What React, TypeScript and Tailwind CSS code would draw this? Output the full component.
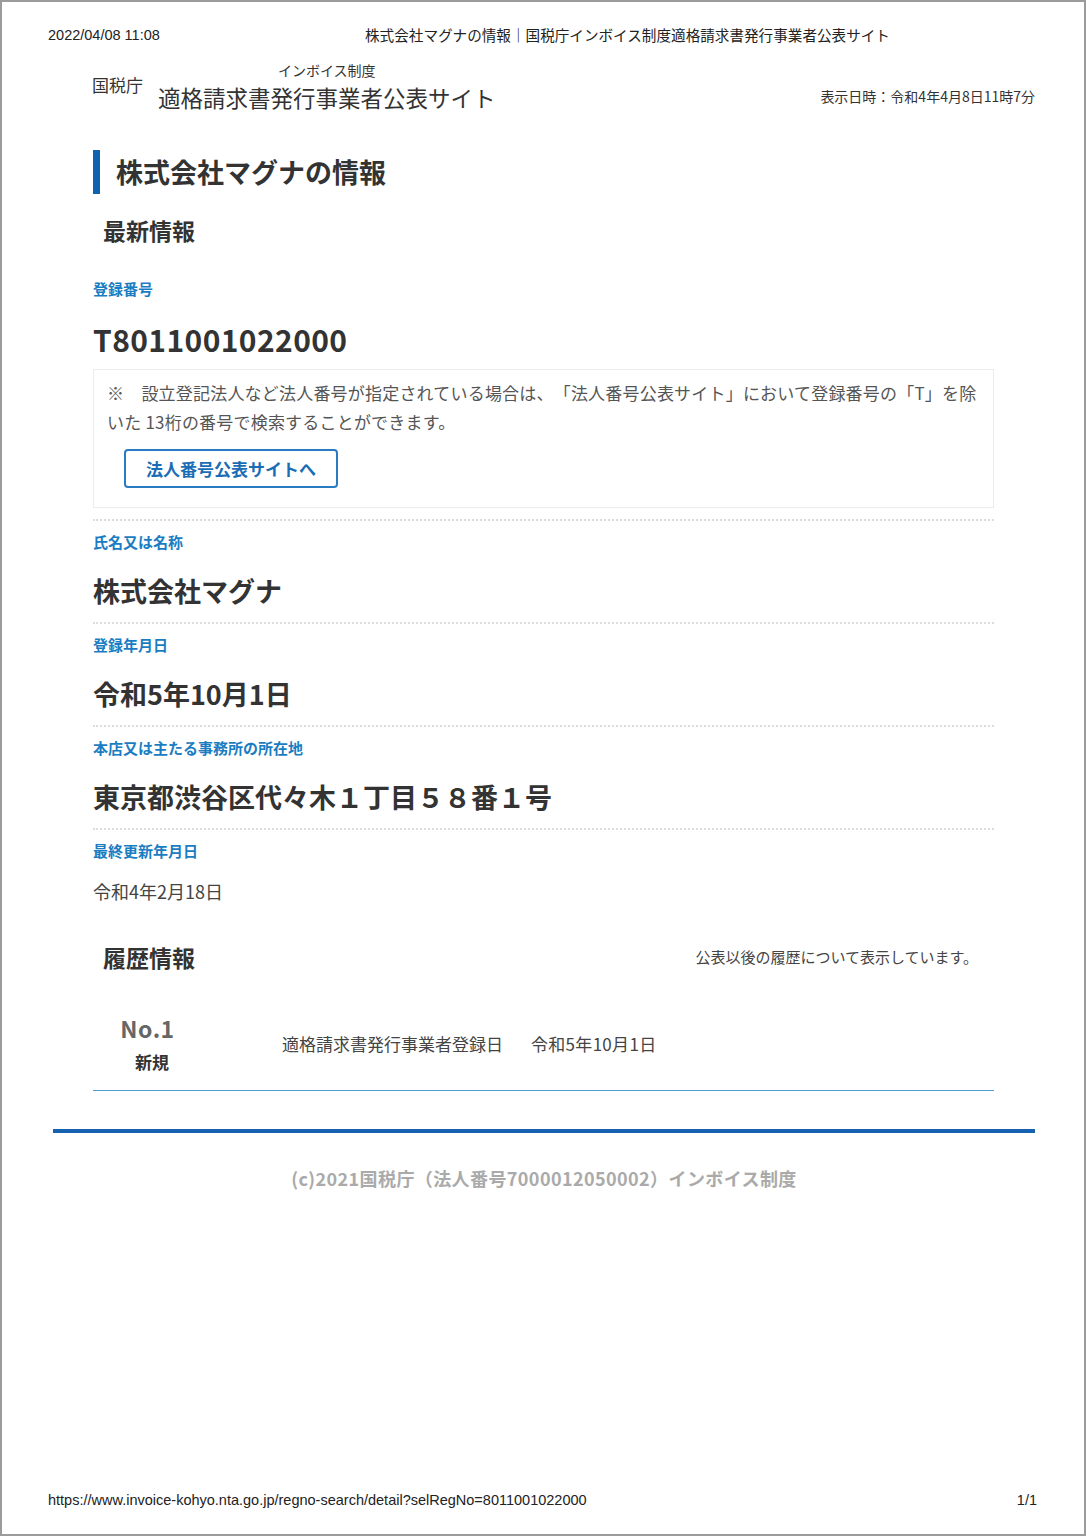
const JP = "font-['Noto_Sans_CJK_JP',sans-serif]";
const PRINT = "font-['Liberation_Sans','Noto_Sans_CJK_JP',sans-serif]";

function Field({ label, value, big = true, dotted = true }: { label: string; value: string; big?: boolean; dotted?: boolean }) {
  return (
    <div className={`${dotted ? 'border-t-2 border-dotted border-[#dcdcdc]' : ''} pt-[11px] pb-[13px]`}>
      <div className="text-[15px] leading-[20px] font-bold text-[#1a7dc2]">{label}</div>
      {big ? (
        <div className="mt-[21px] text-[27px] leading-[36px] font-bold text-[#333]">{value}</div>
      ) : (
        <div className="mt-[17px] text-[18px] leading-[26px] text-[#444]">{value}</div>
      )}
    </div>
  );
}

export default function App() {
  return (
    <div className={`w-[1086px] h-[1536px] border-2 border-[#9b9b9b] bg-white flex flex-col ${JP}`}>
      {/* print header */}
      <div className={`flex pt-[25px] pl-[46px] text-[14.5px] leading-[16px] text-[#222] ${PRINT}`}>
        <span className="w-[317px]">2022/04/08 11:08</span>
        <span className={`text-[14.6px] ${JP}`}>株式会社マグナの情報｜国税庁インボイス制度適格請求書発行事業者公表サイト</span>
      </div>

      <div className="ml-[51px] w-[982px]">
        {/* site header */}
        <div className="mt-[18px] pl-[39px] flex justify-between">
          <div className="flex items-start text-[#333]">
            <span className="mt-[14px] text-[17px] leading-[20px]">国税庁</span>
            <div className="ml-[15px] flex flex-col items-center">
              <span className="text-[14px] leading-[18px]">インボイス制度</span>
              <span className="mt-[4px] text-[22.5px] leading-[28px]">適格請求書発行事業者公表サイト</span>
            </div>
          </div>
          <span className="mt-[26px] text-[14px] leading-[18px] text-[#333]">表示日時：令和4年4月8日11時7分</span>
        </div>

        <div className="pl-[40px] w-[941px]">
          {/* page title */}
          <div className="mt-[39px] h-[44px] flex items-center border-l-[7px] border-[#0f62b0] pl-[16px]">
            <h1 className="text-[27px] leading-[36px] font-bold text-[#333]">株式会社マグナの情報</h1>
          </div>

          <h2 className="mt-[21px] pl-[10px] text-[23px] leading-[30px] font-bold text-[#333]">最新情報</h2>

          {/* registration number */}
          <div className="mt-[34px] text-[15px] leading-[20px] font-bold text-[#1a7dc2]">登録番号</div>
          <div className="mt-[22px] text-[30px] leading-[36px] font-bold tracking-[0.4px] text-[#333]">T8011001022000</div>

          <div className="mt-[12px] border border-[#ececec] pt-[8px] pb-[19px] pl-[13px] pr-[14px]">
            <p className="text-[17px] leading-[29px] tracking-[0.2px] text-[#555] [text-spacing-trim:space-all]">
              ※　設立登記法人など法人番号が指定されている場合は、「法人番号公表サイト」において登録番号の「T」を除
              <br />
              いた 13桁の番号で検索することができます。
            </p>
            <button className="mt-[13px] ml-[17px] h-[39px] w-[214px] rounded-[4px] border-2 border-[#2a7cc2] text-[17px] font-bold text-[#1a6db5]">
              法人番号公表サイトへ
            </button>
          </div>

          <div className="mt-[11px]">
            <Field label="氏名又は名称" value="株式会社マグナ" />
            <Field label="登録年月日" value="令和5年10月1日" />
            <Field label="本店又は主たる事務所の所在地" value="東京都渋谷区代々木１丁目５８番１号" />
            <Field label="最終更新年月日" value="令和4年2月18日" big={false} />
          </div>

          {/* history */}
          <div className="mt-[25px] flex items-center justify-between pl-[10px] pr-[16px]">
            <h2 className="text-[23px] leading-[30px] font-bold text-[#333]">履歴情報</h2>
            <span className="text-[15px] leading-[20px] text-[#444]">公表以後の履歴について表示しています。</span>
          </div>

          <div className="mt-[42px] flex items-center border-b border-[#4a9fd4] pb-[16px]">
            <div className="w-[109px] flex flex-col items-center">
              <span className="text-[23px] leading-[28px] font-bold tracking-[0.5px] text-[#666]">No.1</span>
              <span className="mt-[8px] pl-[9px] text-[17px] leading-[24px] font-bold text-[#333]">新規</span>
            </div>
            <div className="ml-[80px] flex gap-[28px] text-[17px] leading-[24px] text-[#444]">
              <span>適格請求書発行事業者登録日</span>
              <span className="tracking-[0.3px]">令和5年10月1日</span>
            </div>
          </div>
        </div>

        {/* footer */}
        <div className="mt-[38px] h-[4px] bg-[#1662b0]" />
        <p className="mt-[33px] text-center text-[18px] leading-[24px] font-bold tracking-[0.4px] text-[#aaa]">
          (c)2021国税庁（法人番号7000012050002）インボイス制度
        </p>
      </div>

      {/* print footer */}
      <div className={`mt-auto flex justify-between pl-[46px] pr-[47px] pb-[26px] text-[14.5px] leading-[16px] text-[#222] ${PRINT}`}>
        <span>https://www.invoice-kohyo.nta.go.jp/regno-search/detail?selRegNo=8011001022000</span>
        <span>1/1</span>
      </div>
    </div>
  );
}
